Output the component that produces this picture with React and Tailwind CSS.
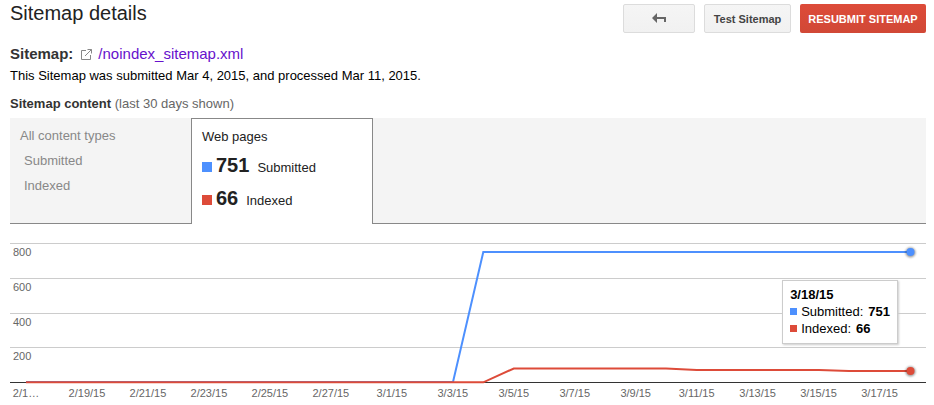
const GRID_LINES = [
  { y: 3, label: '800' },
  { y: 38, label: '600' },
  { y: 73, label: '400' },
  { y: 107, label: '200' },
];

const DATES = [
  '2/1…', '2/19/15', '2/21/15', '2/23/15', '2/25/15', '2/27/15', '3/1/15', '3/3/15',
  '3/5/15', '3/7/15', '3/9/15', '3/11/15', '3/13/15', '3/15/15', '3/17/15',
];

function Chart() {
  return (
    <svg viewBox="0 0 916 162" className="block w-full" role="img" aria-label="Submitted and indexed pages over the last 30 days">
      <defs>
        <filter id="halo" x="-100%" y="-100%" width="300%" height="300%">
          <feGaussianBlur stdDeviation="1" />
        </filter>
      </defs>
      {GRID_LINES.map((line) => (
        <g key={line.label}>
          <rect x="0" y={line.y} width="916" height="1" fill="#ccc" />
          <text x="3" y={line.y + 13} fontSize="11" fill="#666">{line.label}</text>
        </g>
      ))}
      <rect x="0" y="142" width="916" height="1" fill="#333" />
      <polyline points="16,142 443,142 473.3,12 900,12" fill="none" stroke="#4d90fe" strokeWidth="2" />
      <polyline
        points="16,142.3 473.3,142.3 503.8,128.5 656,128.5 686.7,130 809,130 839,131 900,131"
        fill="none"
        stroke="#dd4b39"
        strokeWidth="2"
      />
      <circle cx="900.5" cy="12.5" r="5" fill="#000" opacity="0.4" filter="url(#halo)" />
      <circle cx="900.5" cy="12" r="4" fill="#4d90fe" />
      <circle cx="900.5" cy="131.5" r="5" fill="#000" opacity="0.4" filter="url(#halo)" />
      <circle cx="900.5" cy="131" r="4" fill="#dd4b39" />
      {DATES.map((date, i) => (
        <text key={date} x={16 + i * 60.97} y="157" fontSize="11" fill="#666" textAnchor="middle">{date}</text>
      ))}
    </svg>
  );
}

export default function App() {
  return (
    <main className="bg-white pl-[10px] pr-2 font-['Liberation_Sans',Arial,sans-serif] text-[13px] leading-4 text-[#222]">
      <header className="flex items-start justify-between pt-1">
        <h1 className="text-xl leading-[18px]">Sitemap details</h1>
        <div className="flex gap-[9px] text-[11px] font-bold">
          <button aria-label="Back" className="flex h-[29px] w-[72px] items-center justify-center rounded-xs border border-[#dcdcdc] bg-linear-to-b from-[#f5f5f5] to-[#f1f1f1]">
            <svg width="14" height="12" viewBox="0 0 14 12" fill="#666" aria-hidden="true">
              <path d="M0 5 5 0v4h9v5h-2V6H5v4z" />
            </svg>
          </button>
          <button className="h-[29px] w-[87px] whitespace-nowrap rounded-xs border border-[#dcdcdc] bg-linear-to-b from-[#f5f5f5] to-[#f1f1f1] text-[#444]">Test Sitemap</button>
          <button className="h-[29px] w-[126px] whitespace-nowrap rounded-xs bg-linear-to-b from-[#dd4b39] to-[#d14836] uppercase text-white">Resubmit Sitemap</button>
        </div>
      </header>

      <div className="mt-3 flex items-center text-[15px] leading-[18px]">
        <span className="font-bold text-[#333]">Sitemap:</span>
        <svg className="ml-2 mr-[6px]" width="11" height="11" viewBox="0 0 11 11" fill="none" stroke="#888" aria-hidden="true">
          <path d="M5 1.500H.5v9h9V6M6.500.5h4v4M10.500.5 4 7" />
        </svg>
        <a href="#sitemap" className="text-[#61c]">/noindex_sitemap.xml</a>
      </div>
      <p className="mt-[5px] text-black">This Sitemap was submitted Mar 4, 2015, and processed Mar 11, 2015.</p>
      <h2 className="mt-3 text-[#666]">
        <b className="text-[#333]">Sitemap content</b> (last 30 days shown)
      </h2>

      <div className="mt-[6px] flex h-[106px] bg-[#f4f4f4]">
        <button className="flex w-[181px] flex-col items-start border-b border-[#888] px-[10px] pt-[5px] text-left leading-[25px] text-[#888]">
          <span>All content types</span>
          <span className="pl-1">Submitted</span>
          <span className="pl-1">Indexed</span>
        </button>
        <button className="flex w-[182px] flex-col items-start border-x border-t border-[#888] bg-white px-[10px] pt-[10px] text-left">
          <span>Web pages</span>
          <span className="mt-1 flex h-[33px] items-baseline leading-[33px]">
            <i className="mr-1 size-[10px] bg-[#4d90fe]" />
            <b className="mr-2 text-xl leading-[33px]">751</b>
            Submitted
          </span>
          <span className="flex h-[33px] items-baseline leading-[33px]">
            <i className="mr-1 size-[10px] bg-[#dd4b39]" />
            <b className="mr-2 text-xl leading-[33px]">66</b>
            Indexed
          </span>
        </button>
        <div className="flex-1 border-b border-[#888]" />
      </div>

      <section className="relative mt-4">
        <Chart />
        <div role="tooltip" className="absolute right-7 top-10 border border-[#ccc] bg-white px-[7px] pb-[6px] pt-[5px] leading-[17px] text-black shadow-[1px_1px_2px_#ccc]">
          <div className="font-bold">3/18/15</div>
          <div className="flex items-center gap-1">
            <i className="size-[7px] bg-[#4d90fe]" />
            <span className="flex gap-[5px]">Submitted: <b>751</b></span>
          </div>
          <div className="flex items-center gap-1">
            <i className="size-[7px] bg-[#dd4b39]" />
            <span className="flex gap-[5px]">Indexed: <b>66</b></span>
          </div>
        </div>
      </section>
    </main>
  );
}
